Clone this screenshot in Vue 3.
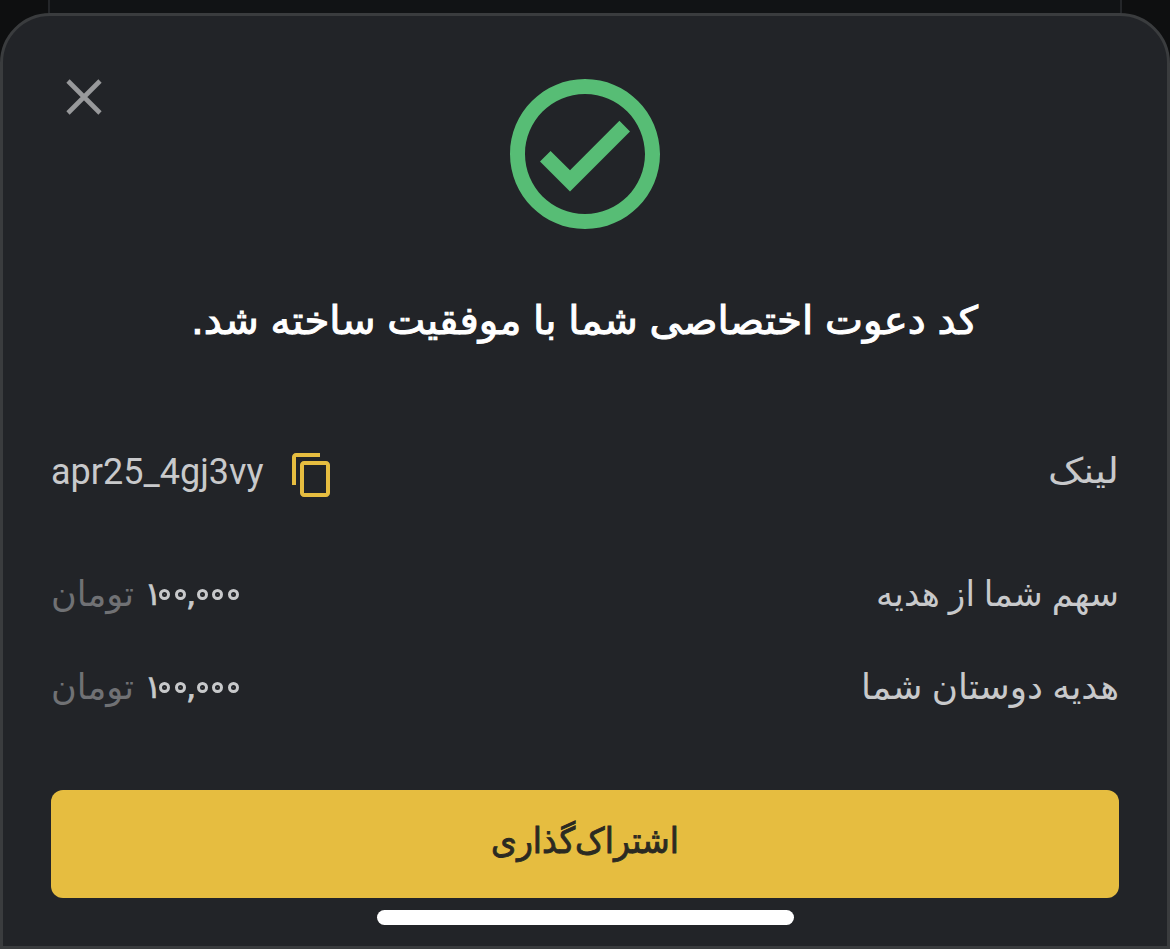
<script setup>
import { ref } from "vue"

const code = ref("apr25_4gj3vy")

const rewards = [
  { label: "سهم شما از هدیه", amount: "۱۰۰,۰۰۰", width: 243 },
  { label: "هدیه دوستان شما", amount: "۱۰۰,۰۰۰", width: 258 }
]

function charClass(char) {
  if (char === "۰") return "zero"
  return char === "," ? "comma" : "digit"
}

function copyCode() {
  navigator.clipboard?.writeText(code.value)
}
</script>

<template>
  <div class="page" dir="rtl">
    <div class="backdrop"></div>
    <section class="sheet">
      <header class="top">
        <button class="close" aria-label="بستن">
          <svg width="36" height="36" viewBox="0 0 36 36">
            <path d="M2 2L34 34M34 2L2 34" fill="none" stroke="#98999b" stroke-width="4.6" />
          </svg>
        </button>
        <svg class="success" width="150" height="150" viewBox="2 2 20 20">
          <path
            fill="#57bd75"
            d="M12 2C6.48 2 2 6.48 2 12s4.48 10 10 10 10-4.48 10-10S17.52 2 12 2zm0 18c-4.41 0-8-3.59-8-8s3.59-8 8-8 8 3.59 8 8-3.59 8-8 8zm4.59-12.42L10 14.17l-2.59-2.58L6 13l4 4 8-8z"
          />
        </svg>
      </header>

      <h1 class="title">
        <svg width="788" height="60">
          <text x="787" y="40" textLength="787" lengthAdjust="spacingAndGlyphs">کد دعوت اختصاصی شما با موفقیت ساخته شد.</text>
        </svg>
      </h1>

      <div class="row link">
        <svg class="label" width="71" height="60">
          <text x="71" y="40" textLength="71" lengthAdjust="spacingAndGlyphs">لینک</text>
        </svg>
        <div class="value" dir="ltr">
          <span class="code">{{ code }}</span>
          <button class="copy" aria-label="کپی" @click="copyCode">
            <svg width="38" height="44" viewBox="2 1 19 22" preserveAspectRatio="none">
              <path
                fill="#e6bd40"
                d="M16 1H4c-1.1 0-2 .9-2 2v14h2V3h12V1zm3 4H8c-1.1 0-2 .9-2 2v14c0 1.1.9 2 2 2h11c1.1 0 2-.9 2-2V7c0-1.1-.9-2-2-2zm0 16H8V7h11v14z"
              />
            </svg>
          </button>
        </div>
      </div>

      <div v-for="reward in rewards" :key="reward.label" class="row reward">
        <svg class="label" :width="reward.width" height="60">
          <text :x="reward.width" y="40" :textLength="reward.width" lengthAdjust="spacingAndGlyphs">{{ reward.label }}</text>
        </svg>
        <div class="value money">
          <div class="amount" dir="ltr">
            <span v-for="(char, i) in reward.amount" :key="i" :class="charClass(char)">{{ char }}</span>
          </div>
          <svg class="unit" width="83" height="60">
            <text x="83" y="40" textLength="83" lengthAdjust="spacingAndGlyphs">تومان</text>
          </svg>
        </div>
      </div>

      <button class="share">
        <svg width="190" height="60">
          <text x="189" y="39" textLength="188" lengthAdjust="spacingAndGlyphs">اشتراک‌گذاری</text>
        </svg>
      </button>
      <div class="home-bar"></div>
    </section>
  </div>
</template>

<style>
body {
  margin: 0;
  background: #121315;
}
</style>

<style scoped>
.page {
  width: 1170px;
  height: 949px;
  display: flex;
  flex-direction: column;
  overflow: hidden;
  font-family: "DejaVu Sans", sans-serif;
  background: #0e0f10;
}

.backdrop {
  height: 13px;
  margin: 0 48px;
  border: solid #242629;
  border-width: 0 2px;
  background: #111315;
}

.sheet {
  box-sizing: border-box;
  height: 936px;
  padding: 0 48px;
  display: flex;
  flex-direction: column;
  border: 3px solid #3a3c3e;
  border-radius: 50px 50px 0 0;
  background: #222428;
}

button {
  padding: 0;
  border: 0;
  background: none;
  line-height: 0;
  cursor: pointer;
}

svg {
  display: block;
  overflow: visible;
}

.top {
  height: 213px;
  display: grid;
  grid-template-columns: 150px 1fr 150px;
  direction: ltr;
  align-items: start;
}

.close {
  justify-self: start;
  margin: 63px 0 0 15px;
}

.success {
  justify-self: center;
  margin-top: 63px;
}

.title {
  height: 60px;
  margin: 65px 0 0;
  align-self: center;
  font-size: 39px;
  font-weight: normal;
  word-spacing: -1px;
}

.title text {
  fill: #fff;
  stroke: #fff;
  stroke-width: 1px;
}

.row {
  height: 60px;
  display: flex;
  align-items: center;
  justify-content: space-between;
  font-size: 35px;
  word-spacing: -2px;
}

.row text {
  fill: #c8c9cb;
}

.link {
  margin-top: 89px;
}

.reward {
  margin-top: 63px;
}

.reward + .reward {
  margin-top: 33px;
}

.value {
  display: flex;
  align-items: center;
}

.code {
  margin-bottom: 3px;
  font-family: Roboto, sans-serif;
  font-size: 36px;
  color: #c8c9cb;
}

.copy {
  margin: 4px -1px 0 29px;
}

.money {
  gap: 13px;
}

.amount {
  box-sizing: border-box;
  width: 94px;
  height: 60px;
  padding-bottom: 5px;
  display: flex;
  align-items: center;
  color: #c8c9cb;
  font-size: 32px;
}

.digit {
  width: 12px;
  display: flex;
  justify-content: center;
  -webkit-text-stroke: 0.6px #c8c9cb;
}

.comma {
  width: 11px;
  display: flex;
  justify-content: center;
  -webkit-text-stroke: 0.8px #c8c9cb;
}

/* Round zeros, drawn as a ring around the small dot of the digit */
.zero {
  box-sizing: border-box;
  width: 11px;
  height: 11px;
  margin-top: 2px;
  border: 3px solid #c8c9cb;
  border-radius: 50%;
  font-size: 5px;
  line-height: 5px;
  text-align: center;
}

.zero + .zero {
  margin-left: 4.5px;
}

.unit text {
  fill: #707174;
}

.share {
  height: 108px;
  margin-top: 71px;
  display: flex;
  align-items: center;
  justify-content: center;
  border-radius: 12px;
  background: #e6bd40;
  font: 36px "DejaVu Sans", sans-serif;
}

.share text {
  fill: #2b2a22;
  stroke: #2b2a22;
  stroke-width: 0.9px;
}

.home-bar {
  width: 417px;
  height: 15px;
  margin-top: 12px;
  align-self: center;
  border-radius: 8px;
  background: #fff;
}
</style>
